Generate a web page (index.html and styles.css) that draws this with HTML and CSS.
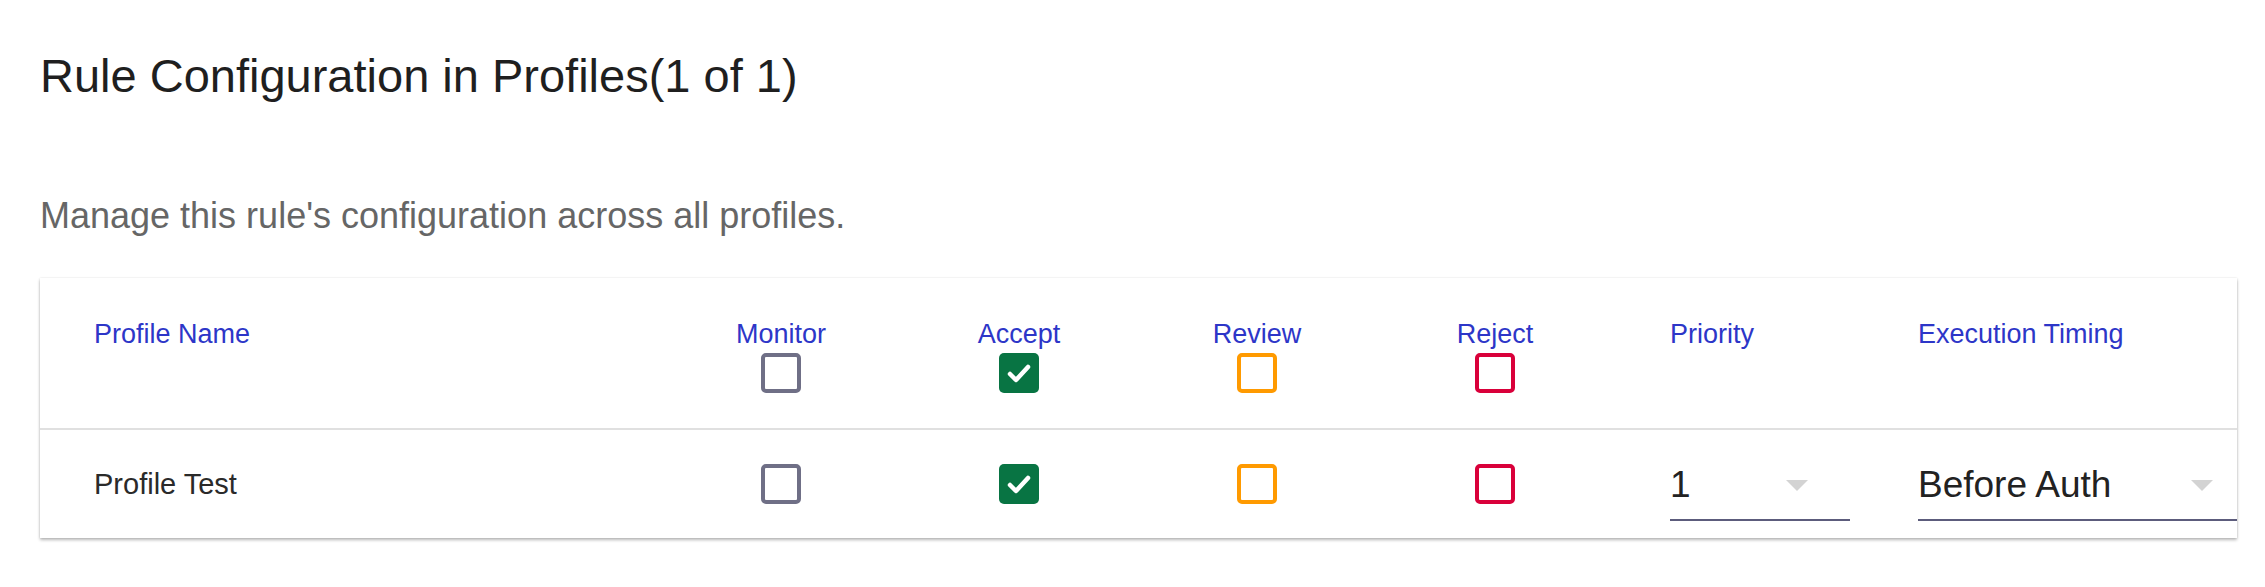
FILE: index.html
```html
<!DOCTYPE html>
<html lang="en">
<head>
<meta charset="utf-8">
<title>Rule Configuration in Profiles</title>
<link rel="stylesheet" href="styles.css">
</head>
<body>
<div class="page">
  <h1 class="title">Rule Configuration in Profiles(1 of 1)</h1>
  <p class="subtitle">Manage this rule's configuration across all profiles.</p>
  <div class="card">
    <div class="grid thead">
      <div class="th th-name">Profile Name</div>
      <div class="th th-center">Monitor<span class="cb cb-monitor"></span></div>
      <div class="th th-center">Accept<span class="cb cb-accept checked"><svg viewBox="0 0 40 40" class="check"><polyline points="11,21 17,27 29,14" /></svg></span></div>
      <div class="th th-center">Review<span class="cb cb-review"></span></div>
      <div class="th th-center">Reject<span class="cb cb-reject"></span></div>
      <div class="th th-pri">Priority</div>
      <div class="th th-exec">Execution Timing</div>
    </div>
    <div class="grid trow">
      <div class="td td-name">Profile Test</div>
      <div class="td td-center"><span class="cb cb-monitor"></span></div>
      <div class="td td-center"><span class="cb cb-accept checked"><svg viewBox="0 0 40 40" class="check"><polyline points="11,21 17,27 29,14" /></svg></span></div>
      <div class="td td-center"><span class="cb cb-review"></span></div>
      <div class="td td-center"><span class="cb cb-reject"></span></div>
      <div class="td td-pri">
        <div class="select select-pri"><span class="select-value">1</span><span class="arrow"></span></div>
      </div>
      <div class="td td-exec">
        <div class="select select-exec"><span class="select-value">Before Auth</span><span class="arrow"></span></div>
      </div>
    </div>
  </div>
</div>
</body>
</html>
```
FILE: styles.css
```css
* { box-sizing: border-box; }
html, body { margin: 0; padding: 0; background: #ffffff; }
body { font-family: "Liberation Sans", Arial, sans-serif; }

.page {
  padding: 48px 28px 30px 40px;
}

.title {
  margin: 0;
  font-size: 47px;
  line-height: 56px;
  font-weight: 400;
  color: #1f1f1f;
}

.subtitle {
  margin: 90px 0 0 0;
  font-size: 36px;
  line-height: 44px;
  color: #666666;
}

.card {
  margin-top: 40px;
  background: #ffffff;
  box-shadow: 0 2px 3px rgba(0, 0, 0, 0.28), 0 0 2px rgba(0, 0, 0, 0.10);
}

.grid {
  display: grid;
  grid-template-columns: 622px 238px 238px 238px 238px 248px 1fr;
}

.thead {
  border-bottom: 2px solid #e0e0e0;
}

.th {
  padding: 40px 0 35px 0;
  font-size: 27px;
  line-height: 32px;
  color: #2d36c8;
  display: flex;
  flex-direction: column;
}

.th-name { padding-left: 54px; }
.th-center { align-items: center; }
.th-center .cb { margin-top: 3px; }
.th-pri { padding-left: 56px; }
.th-exec { padding-left: 56px; }

.trow { height: 108px; }

.td {
  display: flex;
  align-items: center;
}
.td-name {
  padding-left: 54px;
  font-size: 29px;
  color: #2a2a2a;
}
.td-center { justify-content: center; }
.td-pri { padding-left: 56px; }
.td-exec { padding-left: 56px; }

.cb {
  display: block;
  width: 40px;
  height: 40px;
  border: 4px solid #6f6f86;
  border-radius: 5px;
  background: #ffffff;
}
.cb-monitor { border-color: #6f6f86; }
.cb-review { border-color: #ff9a00; }
.cb-reject { border-color: #d9003a; }
.cb-accept.checked {
  border: none;
  background: #087443;
}
.check {
  display: block;
  width: 40px;
  height: 40px;
}
.check polyline {
  fill: none;
  stroke: #ffffff;
  stroke-width: 4.5;
  stroke-linecap: round;
  stroke-linejoin: round;
}

.select {
  display: flex;
  align-items: center;
  justify-content: space-between;
  margin-top: 16px;
  padding-bottom: 12px;
  border-bottom: 2px solid #5c5c7c;
}
.select-pri { width: 180px; padding-right: 42px; }
.select-exec { width: 100%; padding-right: 24px; }

.select-value {
  font-size: 37px;
  line-height: 44px;
  color: #222222;
}

.arrow {
  width: 0;
  height: 0;
  border-left: 11px solid transparent;
  border-right: 11px solid transparent;
  border-top: 11px solid #d3d3d3;
}
```
